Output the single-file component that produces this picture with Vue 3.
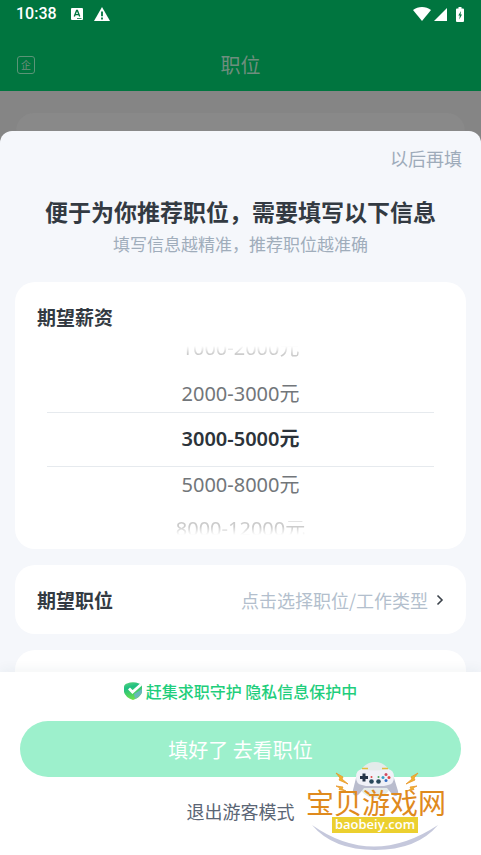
<script setup>
import { ref } from 'vue'

const salaries = [
  { label: '1000-2000元', place: 'first' },
  { label: '2000-3000元', place: 'before' },
  { label: '3000-5000元', place: 'current' },
  { label: '5000-8000元', place: 'after' },
  { label: '8000-12000元', place: 'last' }
]
const selected = ref('3000-5000元')
</script>

<template>
  <div class="page">
    <div class="status">
      <span class="time">10:38</span>
      <svg class="lang" viewBox="0 0 12 12" width="12" height="12">
        <rect width="12" height="12" rx="1" fill="#fff" />
        <path d="M3.300 8.500 5.600 2.500H6.400L8.700 8.500M4.300 6.600H7.700" fill="none" stroke="#00753f" stroke-width="1.400" />
        <path d="M6 10.500H10.500" stroke="#00753f" stroke-width=".8" />
      </svg>
      <svg class="warn" viewBox="0 0 16 14" width="16" height="14">
        <path d="M8 0 16 14H0Z" fill="#fff" />
        <path d="M8 4.500V9.300M8 10.600V12.400" stroke="#00753f" stroke-width="1.800" />
      </svg>
      <span class="fill"></span>
      <svg viewBox="0 0 18 14" width="18" height="14">
        <path d="M0 3C5-1 13-1 18 3L9 14Z" fill="#fff" />
      </svg>
      <svg class="signal" viewBox="0 0 13 13" width="13" height="13">
        <path d="M13 0V13H0Z" fill="#fff" />
      </svg>
      <svg class="battery" viewBox="0 0 8 15" width="8" height="15">
        <path d="M2.500 0H5.500V1.500H7Q8 1.500 8 2.500V14Q8 15 7 15H1Q0 15 0 14V2.500Q0 1.500 1 1.500H2.500Z" fill="#fff" />
        <path d="M5 4 2.300 8.500H3.800L3.300 12.500 6 7.500H4.500Z" fill="#00753f" />
      </svg>
    </div>

    <header class="header">
      <button class="company" type="button">企</button>
      <h1>职位</h1>
      <span></span>
    </header>

    <div class="behind"><div class="behind-card"></div></div>

    <main class="sheet">
      <div class="scroll">
        <div class="skip-row"><button class="skip" type="button">以后再填</button></div>
        <h2>便于为你推荐职位，需要填写以下信息</h2>
        <p class="sub">填写信息越精准，推荐职位越准确</p>

        <section class="card salary">
          <h3>期望薪资</h3>
          <div class="picker">
            <button
              v-for="item in salaries"
              :key="item.label"
              type="button"
              :class="['option', item.place]"
              :aria-pressed="selected === item.label"
              @click="selected = item.label"
            >{{ item.label }}</button>
          </div>
        </section>

        <section class="card job">
          <h3>期望职位</h3>
          <button class="choose" type="button">
            点击选择职位/工作类型
            <svg viewBox="0 0 8 12" width="8" height="12">
              <path d="M1.500 1.500 6 6 1.500 10.500" fill="none" stroke="#3c434b" stroke-width="1.600" />
            </svg>
          </button>
        </section>

        <section class="card next"></section>
      </div>

      <footer class="footer">
        <div class="guard">
          <svg viewBox="0 0 18 18" width="18" height="18">
            <defs>
              <linearGradient id="shield" x1="0" y1="0" x2="0.300" y2="1">
                <stop offset="0" stop-color="#5fd67a" />
                <stop offset=".35" stop-color="#1fbf83" />
                <stop offset="1" stop-color="#6be04a" />
              </linearGradient>
            </defs>
            <path d="M3 1.500Q9-.8 15 1.500Q18 2.500 18 5V10Q17 15 9 18Q1 15 0 10V5Q0 2.500 3 1.500Z" fill="url(#shield)" />
            <path d="M18 7V10Q17 14 11 17L10 12Z" fill="#6eaed2" opacity=".8" />
            <path d="M5 6.500 8.500 10 17 2.500" fill="none" stroke="#fff" stroke-width="2.800" />
          </svg>
          <span>赶集求职守护 隐私信息保护中</span>
        </div>
        <button class="submit" type="button">填好了 去看职位</button>
        <button class="guest" type="button">退出游客模式</button>
      </footer>
    </main>

    <svg class="mark" viewBox="0 0 144 92" width="144" height="92">
      <ellipse cx="70" cy="18" rx="17" ry="18" fill="#e4ebea" />
      <path d="M7 63Q68 106 133 63Q112 88 70 88Q28 88 7 63Z" fill="#c5c8dc" />
      <path d="M56 8Q70 11 84 8Q88 9 89 16L93 29Q94 34 90 34Q88 34 86 31L82 26H59L55 31Q52 35 49 33Q47 32 48 28L51 16Q52 9 56 8Z" fill="#b9bccd" />
      <path d="M57 7Q70 10 83 7Q89 8 89 15Q89 22 83 23L79 24H61L57 23Q51 22 51 15Q51 8 57 7Z" fill="#f0f1f7" />
      <path d="M57 6.500H63M77 6.500H83" stroke="#e3bb3c" stroke-width="1.600" />
      <path d="M59 11.500V19.500M55 15.500H63" stroke="#253447" stroke-width="3" />
      <circle cx="66.500" cy="19.500" r="2.300" fill="#28485a" />
      <circle cx="73.500" cy="19.500" r="2.300" fill="#28485a" />
      <circle cx="66.500" cy="15" r="1" fill="#e04848" />
      <circle cx="73.500" cy="15" r="1" fill="#4aa35c" />
      <circle cx="81" cy="12.500" r="1.500" fill="#d24a61" />
      <circle cx="81" cy="18.500" r="1.500" fill="#346ec4" />
      <circle cx="78" cy="15.500" r="1.500" fill="#3aa0c4" />
      <circle cx="84" cy="15.500" r="1.500" fill="#e04848" />
      <path d="M31 11 38 15 37 17 43 22 34 18 35 16ZM31 24 38 25 37 27 41 29 34 27.500 35 26ZM113 11 106 15 107 17 101 22 110 18 109 16ZM112 24 105 25 106 27 102 29 109 27.500 108 26Z" fill="#f0b52e" stroke="#e8962a" stroke-width=".8" />
      <text x="1" y="52" class="mark-name">宝贝游戏网</text>
      <rect x="27" y="55" width="86" height="16" fill="#ecd02f" />
      <text x="70" y="67" text-anchor="middle" class="mark-url">baobeiy.com</text>
    </svg>
  </div>
</template>

<style>
body {
  margin: 0;
}
</style>

<style scoped>
* {
  box-sizing: border-box;
}
.page {
  position: relative;
  display: flex;
  flex-direction: column;
  height: 100vh;
  background: #858585;
  font-family: "Noto Sans CJK SC", sans-serif;
  color: #333a42;
}
button {
  border: 0;
  padding: 0;
  background: none;
  font-family: inherit;
  color: inherit;
}
svg {
  display: block;
  flex: none;
}
h1, h2, h3, p {
  margin: 0;
}
.status {
  display: flex;
  align-items: center;
  height: 28px;
  padding: 0 17px 0 16px;
  background: #00753f;
  color: #fff;
}
.time {
  font: 500 16px/28px Roboto, sans-serif;
}
.lang {
  margin-left: 14px;
}
.warn {
  margin-left: 11px;
}
.fill {
  flex: 1;
}
.signal {
  margin-left: 3px;
}
.battery {
  margin-left: 9px;
}
.header {
  display: grid;
  grid-template-columns: 1fr auto 1fr;
  align-items: center;
  height: 63px;
  padding: 10px 17px 0;
  background: #00753f;
  color: #6e8e7e;
}
.header h1 {
  font-size: 20px;
  line-height: 28px;
  font-weight: 400;
}
.company {
  width: 18px;
  height: 18px;
  border: 1px solid #5b9477;
  border-radius: 3px;
  font-size: 10px;
  line-height: 16px;
}
.behind {
  flex: none;
  height: 40px;
  padding: 22px 16px 0;
}
.behind-card {
  height: 18px;
  border-radius: 18px 18px 0 0;
  background: #898989;
}
.sheet {
  flex: 1;
  min-height: 0;
  display: flex;
  flex-direction: column;
  border-radius: 12px 12px 0 0;
  background: #f5f7fb;
  overflow: hidden;
}
.scroll {
  flex: 1;
  min-height: 0;
  overflow-y: auto;
  scrollbar-width: none;
  padding: 0 15px;
}
.skip-row {
  display: flex;
  justify-content: flex-end;
  padding: 13px 4px 0 0;
}
.skip {
  font-size: 18px;
  line-height: 28px;
  color: #9eabba;
}
h2 {
  padding-top: 22px;
  font-size: 23px;
  line-height: 34px;
  font-weight: 700;
  text-align: center;
}
.sub {
  padding: 2px 0 24px;
  font-size: 17px;
  line-height: 28px;
  text-align: center;
  color: #a0adbb;
}
.card {
  margin-bottom: 16px;
  padding: 0 22px;
  border-radius: 20px;
  background: #fff;
}
h3 {
  font-size: 19px;
  line-height: 28px;
  font-weight: 700;
}
.salary {
  padding-top: 21px;
  padding-bottom: 14px;
}
.picker {
  display: flex;
  flex-direction: column;
  margin: 15px 10px 0;
}
.option {
  font-family: "Noto Sans", "Noto Sans CJK SC", sans-serif;
  font-size: 20px;
  line-height: 36px;
  color: #72767a;
  overflow: hidden;
}
.first, .last {
  display: flex;
  justify-content: center;
  height: 13px;
  color: #ccc;
}
.first {
  align-items: flex-end;
  line-height: 22px;
  margin-bottom: 17px;
  mask-image: linear-gradient(transparent, #000 60%);
}
.last {
  height: 14px;
  line-height: 16px;
  margin-top: 18px;
  mask-image: linear-gradient(#000 40%, transparent);
}
.current {
  height: 55px;
  padding-bottom: 2px;
  border-top: 1px solid #e6eaee;
  border-bottom: 1px solid #e6eaee;
  color: #2c333a;
  font-weight: 600;
}
.job {
  display: flex;
  align-items: center;
  justify-content: space-between;
  height: 69px;
}
.choose {
  display: flex;
  align-items: center;
  gap: 8px;
  font-size: 18px;
  line-height: 28px;
  color: #b3bfcd;
}
.next {
  height: 69px;
}
.footer {
  position: relative;
  flex: none;
  display: flex;
  flex-direction: column;
  align-items: center;
  padding: 6px 20px 30px;
  background: #fff;
  box-shadow: 0 -2px 12px rgba(40, 60, 80, 0.06);
}
.guard {
  display: flex;
  align-items: center;
  gap: 4px;
  height: 26px;
  font-size: 16px;
  font-weight: 500;
  color: #1fce7c;
}
.submit {
  width: 100%;
  height: 56px;
  margin: 17px 0 20px;
  border-radius: 28px;
  background: #9df0cc;
  font-size: 20px;
  color: #fff;
}
.guest {
  font-size: 18px;
  line-height: 28px;
  color: #5b6675;
}
.mark {
  position: absolute;
  right: 32px;
  bottom: 1px;
}
.mark-name {
  font-size: 28px;
  fill: #df8a1d;
}
.mark-url {
  font: 600 13px "Open Sans", sans-serif;
  fill: #fff;
}
</style>
